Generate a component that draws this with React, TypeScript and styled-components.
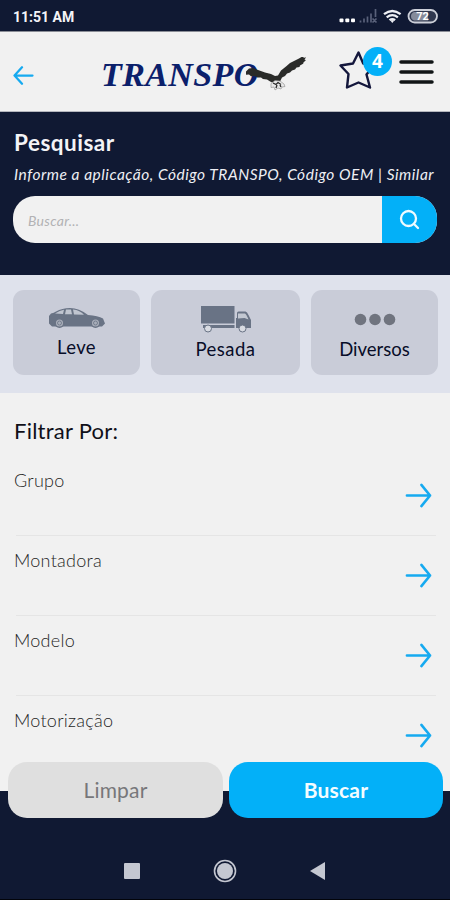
import React from 'react';
import styled, { createGlobalStyle } from 'styled-components';

const colors = {
  navy: '#101933',
  paper: '#f1f1f1',
  blue: '#03b0f8',
  band: '#dfe2ec',
  tile: '#c9ccd8',
  ink: '#080d28',
  slate: '#697385',
};

const GlobalStyle = createGlobalStyle`
  * { box-sizing: border-box; }
  body { margin: 0; background: ${colors.navy}; font-family: Lato, "Open Sans", sans-serif; }
  button, input { font-family: inherit; border: 0; padding: 0; }
  svg { display: block; flex: none; }
`;

const Screen = styled.div`
  width: 450px;
  height: 900px;
  overflow: hidden;
  display: flex;
  flex-direction: column;
  background: ${colors.navy};
`;

const StatusBar = styled.div`
  height: 31px;
  flex: none;
  display: flex;
  align-items: center;
  justify-content: space-between;
  padding: 2px 12px 0 13px;
  color: #f4f4f8;
`;

const Clock = styled.span`
  font: 700 14px Roboto, sans-serif;
`;

const Header = styled.header`
  height: 81px;
  flex: none;
  display: flex;
  align-items: center;
  padding: 0 16px 0 13px;
  background: ${colors.paper};
  border-top: 1px solid #8a8d96;
  border-bottom: 1px solid #b4b6bd;
`;

const IconButton = styled.button`
  display: flex;
  background: none;
`;

const BackButton = styled(IconButton)`
  margin-top: 7px;
`;

const Brand = styled.div`
  display: flex;
  align-items: center;
  margin: 7px 0 0 67px;
`;

const BrandName = styled.span`
  font: italic 700 34px/38px "Liberation Serif", serif;
  color: #0b206b;
  width: 160px;
  margin-right: -17px;
  white-space: nowrap;
  letter-spacing: 0.4px;
`;

const Favorites = styled.div`
  position: relative;
  margin: -3px 0 0 30px;
`;

const Badge = styled.span`
  position: absolute;
  left: 25px;
  top: -3px;
  width: 29px;
  height: 29px;
  border-radius: 50%;
  background: ${colors.blue};
  color: #fff;
  font: 700 19px/29px "Open Sans", sans-serif;
  text-align: center;
`;

const MenuButton = styled(IconButton)`
  margin-left: auto;
`;

const SearchPanel = styled.section`
  height: 163px;
  flex: none;
  padding: 18px 13px 0;
`;

const Title = styled.h1`
  margin: 0 0 0 1px;
  font-size: 22.5px;
  line-height: 26px;
  font-weight: 700;
  letter-spacing: 0.5px;
  color: #f4f4f7;
`;

const Hint = styled.p`
  margin: 7px 0 0 1px;
  font-size: 15.5px;
  line-height: 22px;
  font-style: italic;
  white-space: nowrap;
  letter-spacing: 0.52px;
  color: #eeeff4;
`;

const SearchBox = styled.div`
  height: 47px;
  margin-top: 11px;
  display: flex;
  border-radius: 22px;
  overflow: hidden;
  background: ${colors.paper};
`;

const SearchInput = styled.input`
  flex: 1;
  min-width: 0;
  padding: 2px 0 0 15px;
  background: transparent;
  font-size: 14px;
  font-style: italic;
  letter-spacing: 0.3px;
  &::placeholder { color: #b2b2b4; opacity: 1; }
`;

const SearchButton = styled.button`
  width: 55px;
  display: flex;
  align-items: center;
  justify-content: center;
  background: ${colors.blue};
`;

const Categories = styled.nav`
  height: 118px;
  flex: none;
  display: grid;
  grid-template-columns: 127px 149px 127px;
  gap: 11px;
  padding: 15px 12px 18px 13px;
  background: ${colors.band};
`;

const Category = styled.button`
  display: flex;
  flex-direction: column;
  align-items: center;
  justify-content: space-between;
  padding: 15px 0 15px;
  border-radius: 11px;
  background: ${colors.tile};
`;

const CategoryLabel = styled.span<{ $spacing: number; $lift?: number }>`
  font-size: 18.5px;
  line-height: 24px;
  margin-bottom: ${(p) => p.$lift ?? 0}px;
  letter-spacing: ${(p) => p.$spacing}px;
  color: ${colors.ink};
`;

const Filters = styled.main`
  height: 398px;
  flex: none;
  overflow: hidden;
  padding: 24px 14px 0;
  background: ${colors.paper};
`;

const FilterTitle = styled.h2`
  margin: 0;
  height: 39px;
  font-size: 22px;
  line-height: 27px;
  font-weight: 400;
  letter-spacing: 0.25px;
  color: #101019;
`;

const FilterRow = styled.div`
  height: 80px;
  display: flex;
  justify-content: space-between;
  padding: 12px 4px 0 0;
  background: linear-gradient(#e5e5e5, #e5e5e5) 2px 100% / 420px 1px no-repeat;
  &:last-child { background: none; }
`;

const FilterLabel = styled.span`
  font-size: 18px;
  line-height: 24px;
  font-weight: 300;
  letter-spacing: 0.25px;
  color: #252525;
`;

const RowArrow = styled.span`
  padding-top: 14px;
`;

const Actions = styled.div`
  height: 56px;
  flex: none;
  margin-top: -29px;
  position: relative;
  display: grid;
  grid-template-columns: 215px 214px;
  gap: 6px;
  padding-left: 8px;
`;

const Action = styled.button<{ $primary?: boolean }>`
  border-radius: 19px;
  padding-bottom: 2px;
  background: ${(p) => (p.$primary ? colors.blue : '#dfdfdf')};
  color: ${(p) => (p.$primary ? '#f4fcff' : '#77777a')};
  font-size: 21px;
  letter-spacing: 0.2px;
  font-weight: ${(p) => (p.$primary ? 700 : 400)};
`;

const SystemNav = styled.footer`
  flex: 1;
  display: flex;
  justify-content: center;
  align-items: center;
  gap: 73px;
  padding-top: 24px;
  border-bottom: 1px solid #02040b;
`;

const Arrow = ({ size, left = false }: { size: number; left?: boolean }) => (
  <svg width={size} height={size} viewBox="0 0 28 28" fill="none" stroke="#16aaf0" strokeWidth={left ? 3 : 2.7} strokeLinecap="round" strokeLinejoin="round">
    <path d={left ? 'M26 14H2M12 3L2 14l10 11' : 'M2 14h24M17 3l9 11-9 11'} />
  </svg>
);

const StatusIcons = () => (
  <svg width="102" height="24" viewBox="336 5 102 24">
    <g fill="#fff">
      <rect x="339.5" y="18.500" width="4" height="3.800" rx="1" />
      <rect x="345.3" y="18.500" width="4" height="3.800" rx="1" />
      <rect x="351" y="18.500" width="4" height="3.800" rx="1" />
    </g>
    <path d="M360.500 22.500v-2M364 22.500v-4M367.500 22.500v-6M371 22.500v-9M375.500 17v-8M372.500 18.500l4 4m0-4l-4 4" stroke="#59617a" strokeWidth="1.700" />
    <g fill="none" stroke="#eef0f5" strokeWidth="2.300">
      <path d="M384 14.200q8.300-6.500 16.600 0M386.700 17.300q5.600-4.300 11.200 0M389.500 20.200q2.800-2.200 5.600 0" />
    </g>
    <path d="M390.300 20.500q2-1.200 4 0l-2 2.600z" fill="#eef0f5" />
    <rect x="408.500" y="10" width="28.500" height="12.500" rx="6.200" fill="#30384f" stroke="#cdd0d9" strokeWidth="1.800" />
    <path d="M414 12h14v8.500h-14q-3-1-3-4.200t3-4.300" fill="#858b9b" />
    <text x="422.500" y="20.200" textAnchor="middle" fill="#fff" fontFamily="Roboto" fontSize="11" fontWeight="700">72</text>
  </svg>
);

const Eagle = () => (
  <svg width="64" height="36" viewBox="244 57 64 36">
    <path d="M246 71.500l3-3 4-.5 5 2 7 2.500 6 1.500 4 2 3-.5 3-5 5-4 4-3.500 5-2.500 4-2 5-3-.5 2.500 2.500-.8-1.500 2.500 1.500.3-3 3 .5.500-3.500 2-.5 1.500-3 .5-1.500 2-3 1-2 2-3 1-2 2.500-3 1.500-2 4-4 2-5-1.500-4-2.500-4-.5-2-1.500-4 0-2-1.500-4 .2-2-1.700-3 .3z" fill="#2a2b29" />
    <path d="M271 83.500l4-3 5 .5 4 3 1 2.500-3 .5-1 2-3-1-3 2-1-3-3 .5z" fill="#e8e8e8" stroke="#8a8a8a" strokeWidth=".6" />
    <path d="M273 83l3 1.500 2-2 3 2M277 85l-1 3M280 85l1 2" fill="none" stroke="#292929" strokeWidth="1.300" />
  </svg>
);

const Star = () => (
  <svg width="36" height="40" viewBox="338 50 36 40" fill="none" stroke="#14173c" strokeWidth="2.400" strokeLinejoin="round">
    <path d="M358.500 52.500l4.700 11 11 1.500-7.700 9.500 3.500 13-11.500-5-11.500 5 1.500-13.500-8-8.500 12.500-2z" />
  </svg>
);

const Car = () => (
  <svg width="58" height="24" viewBox="48 306 58 24">
    <path d="M49 317l2-2.500q3-.500 5-2 6-3.500 14-3.500 9 0 18 7 10 .500 15 3.500l2 5-3 3H52l-3-3z" fill={colors.slate} />
    <path d="M55 314.500q5-3.300 9-3.800l-1 4.300zM66 310.500h5l1 4.800h-7zM73 310.500q7 .700 11 5.200l-10-.2z" fill="#c0c5d0" />
    <g fill="#a8adb9" stroke={colors.slate} strokeWidth="1.500">
      <circle cx="59.500" cy="324" r="4.300" /><circle cx="95.500" cy="324" r="4.300" />
    </g>
    <g fill="none" stroke={colors.slate} strokeWidth=".8">
      <circle cx="59.500" cy="324" r="2" /><circle cx="95.500" cy="324" r="2" />
    </g>
  </svg>
);

const Truck = () => (
  <svg width="52" height="28" viewBox="199 305 52 28">
    <path d="M200 306h33.500v17.500H200zM202 325h31.500v3H202zM235 328v-10h1v-5q0-1.500 1.500-1.500h7q1.500 0 3 3.500l2.500 5v8z" fill={colors.slate} />
    <path d="M237 313.500h7q1.500 1 3.500 6l-4-1.500-6.500.5z" fill="#c3c8d2" />
    <g fill="#d8dbe2" stroke={colors.slate}>
      <circle cx="207" cy="328.500" r="3.500" /><circle cx="241.500" cy="328.500" r="3.500" />
    </g>
  </svg>
);

const Dots = () => (
  <svg width="42" height="28" viewBox="0 0 42 28" fill="#70747f">
    <circle cx="6.500" cy="14.500" r="5.800" /><circle cx="21" cy="14.500" r="5.800" /><circle cx="35.500" cy="14.500" r="5.800" />
  </svg>
);

const categories = [
  { label: 'Leve', icon: <Car />, spacing: 0.4, lift: 1 },
  { label: 'Pesada', icon: <Truck />, spacing: 0.5, lift: -1 },
  { label: 'Diversos', icon: <Dots />, spacing: 0, lift: -1 },
];

const filters = ['Grupo', 'Montadora', 'Modelo', 'Motorização'];

export default function App() {
  return (
    <Screen>
      <GlobalStyle />
      <StatusBar><Clock>11:51 AM</Clock><StatusIcons /></StatusBar>
      <Header>
        <BackButton aria-label="Voltar"><Arrow size={21} left /></BackButton>
        <Brand><BrandName>TRANSPO</BrandName><Eagle /></Brand>
        <Favorites><Star /><Badge>4</Badge></Favorites>
        <MenuButton aria-label="Menu">
          <svg width="35" height="26" viewBox="0 0 35 26" stroke="#111516" strokeWidth="3.500" strokeLinecap="round">
            <path d="M2 3h31M2 13h31M2 23h31" />
          </svg>
        </MenuButton>
      </Header>
      <SearchPanel>
        <Title>Pesquisar</Title>
        <Hint>Informe a aplicação, Código TRANSPO, Código OEM | Similar</Hint>
        <SearchBox>
          <SearchInput placeholder="Buscar..." />
          <SearchButton aria-label="Pesquisar">
            <svg width="22" height="22" viewBox="0 0 22 22" fill="none" stroke="#effbff" strokeWidth="2.300" strokeLinecap="round">
              <circle cx="9.500" cy="9.500" r="7.500" /><path d="M15 15l4 4" />
            </svg>
          </SearchButton>
        </SearchBox>
      </SearchPanel>
      <Categories>
        {categories.map((c) => (
          <Category key={c.label}>
            {c.icon}
            <CategoryLabel $spacing={c.spacing} $lift={c.lift}>{c.label}</CategoryLabel>
          </Category>
        ))}
      </Categories>
      <Filters>
        <FilterTitle>Filtrar Por:</FilterTitle>
        {filters.map((label) => (
          <FilterRow key={label}>
            <FilterLabel>{label}</FilterLabel>
            <RowArrow><Arrow size={27} /></RowArrow>
          </FilterRow>
        ))}
      </Filters>
      <Actions><Action>Limpar</Action><Action $primary>Buscar</Action></Actions>
      <SystemNav>
        <svg width="16" height="16"><rect width="16" height="16" rx="1" fill="#c4c7d1" /></svg>
        <svg width="24" height="24"><circle cx="12" cy="12" r="10.500" fill="none" stroke="#c4c7d1" strokeWidth="1.600" /><circle cx="12" cy="12" r="8" fill="#c4c7d1" /></svg>
        <svg width="16" height="18"><path d="M0 9L15 0v18z" fill="#c4c7d1" /></svg>
      </SystemNav>
    </Screen>
  );
}
